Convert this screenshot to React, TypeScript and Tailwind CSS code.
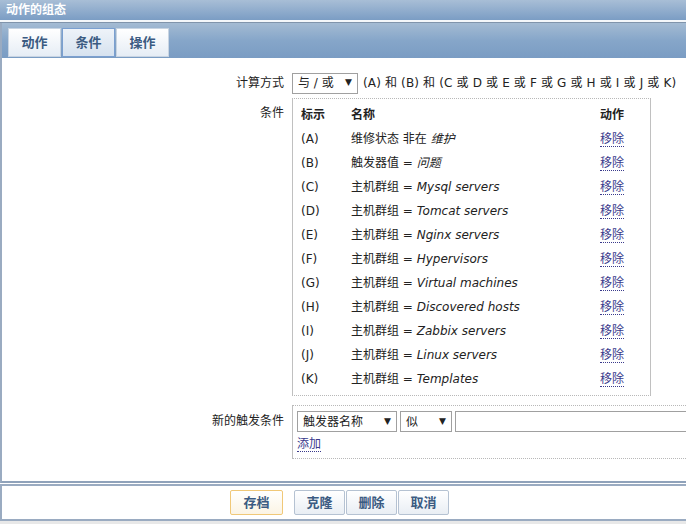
import React from "react";

const F = { fontFamily: '"DejaVu Sans", "Noto Sans CJK SC", sans-serif' };

const rows: [string, string, string][] = [
  ["(A)", "维修状态 非在 ", "维护"],
  ["(B)", "触发器值 = ", "问题"],
  ["(C)", "主机群组 = ", "Mysql servers"],
  ["(D)", "主机群组 = ", "Tomcat servers"],
  ["(E)", "主机群组 = ", "Nginx servers"],
  ["(F)", "主机群组 = ", "Hypervisors"],
  ["(G)", "主机群组 = ", "Virtual machines"],
  ["(H)", "主机群组 = ", "Discovered hosts"],
  ["(I)", "主机群组 = ", "Zabbix servers"],
  ["(J)", "主机群组 = ", "Linux servers"],
  ["(K)", "主机群组 = ", "Templates"],
];

function Link({ children }: { children: React.ReactNode }) {
  return (
    <span className="text-[#3a3a8c] border-b border-dotted border-[#3a3a8c] leading-[14px]">{children}</span>
  );
}

function Sel({ w, children }: { w: string; children: React.ReactNode }) {
  return (
    <div className={`${w} shrink-0 h-[21px] border border-[#a0a0a0] bg-white flex items-center justify-between pl-[5px] pr-[5px] text-[12px] text-[#222]`}>
      <span>{children}</span>
      <span className="text-[9px]">▼</span>
    </div>
  );
}

const tabCls =
  "h-[29px] w-[53px] flex items-center justify-center text-[13px] font-bold text-[#3b5b82] border border-[#c8d4e2] bg-gradient-to-b from-white to-[#e6edf5]";

export default function App() {
  return (
    <div className="w-[686px] h-[524px] bg-[#e8e8e8] overflow-hidden text-[12px] text-[#222]" style={F}>
      <div className="h-[20px] bg-gradient-to-b from-[#a8bed6] to-[#7b9dc4] text-white font-bold text-[12px] px-[6px] flex items-center">
        动作的组态
      </div>
      <div className="h-[3px] bg-[#f4f7fa] border-b border-[#8094ab]" />
      <div className="bg-white border-l-2 border-[#9aabc1] h-[460px] border-b-2 border-b-[#8fa2ba] flex flex-col">
        <div className="h-[35px] bg-gradient-to-b from-[#a4bbd3] via-[#86a6c9] to-[#7a9cc3] flex items-end gap-[1px] pl-[6px] pb-[1px]">
          <div className={tabCls}>动作</div>
          <div className="h-[29px] w-[53px] flex items-center justify-center text-[13px] font-bold text-[#3b5b82] border border-[#7a9fd0] bg-gradient-to-b from-[#eef3f9] to-[#d6e2ef]">
            条件
          </div>
          <div className={tabCls}>操作</div>
        </div>
        <div className="pt-[15px] flex flex-col">
          <div className="flex items-center h-[20px]">
            <div className="w-[290px] shrink-0 text-right pr-[8px]">计算方式</div>
            <Sel w="w-[66px]">与 / 或</Sel>
            <span className="ml-[5px] whitespace-nowrap tracking-[0.15px]">(A) 和 (B) 和 (C 或 D 或 E 或 F 或 G 或 H 或 I 或 J 或 K)</span>
          </div>
          <div className="flex mt-[5px]">
            <div className="w-[290px] shrink-0 text-right pr-[8px] pt-[6px]">条件</div>
            <div className="w-[359px] shrink-0 border-x border-[#c0c0c0] border-y border-y-[#b8b8b8] border-dotted px-[8px] pt-[3px] pb-[4px]" style={{ borderLeftStyle: "solid", borderRightStyle: "solid" }}>
              <div className="flex h-[25px] items-center font-bold">
                <div className="w-[50px]">标示</div>
                <div className="w-[249px]">名称</div>
                <div>动作</div>
              </div>
              {rows.map((r) => (
                <div key={r[0]} className="flex h-[24px] items-center">
                  <div className="w-[50px]">{r[0]}</div>
                  <div className="w-[249px] whitespace-nowrap">
                    {r[1]}
                    <i>{r[2]}</i>
                  </div>
                  <div>
                    <Link>移除</Link>
                  </div>
                </div>
              ))}
            </div>
          </div>
          <div className="flex mt-[9px]">
            <div className="w-[290px] shrink-0 text-right pr-[8px] pt-[7px]">新的触发条件</div>
            <div className="flex-1 min-w-0 h-[54px] border-y border-dotted border-[#b8b8b8] border-l border-l-[#c0c0c0] pl-[4px] pt-[5px]" style={{ borderLeftStyle: "solid" }}>
              <div className="flex gap-[3px]">
                <Sel w="w-[100px]">触发器名称</Sel>
                <Sel w="w-[52px]">似</Sel>
                <div className="w-[300px] shrink-0 h-[21px] border border-[#a0a0a0] bg-white" />
              </div>
              <div className="mt-[3px] h-[18px] flex items-center">
                <Link>添加</Link>
              </div>
            </div>
          </div>
        </div>
      </div>
      <div className="h-[1px] bg-white" />
      <div className="h-[37px] bg-white border-2 border-[#9aabc1] border-r-0 flex items-center pl-[228px]">
        <div className="h-[25px] w-[53px] flex items-center justify-center rounded-[2px] border border-[#f0c878] bg-gradient-to-b from-white to-[#fbf4e4] text-[13px] font-bold text-[#3b5b82]">
          存档
        </div>
        <div className="ml-[11px] flex gap-[1px]">
          {["克隆", "删除", "取消"].map((t) => (
            <div key={t} className="h-[25px] w-[51px] flex items-center justify-center rounded-[2px] border border-[#b5c2d2] bg-gradient-to-b from-white to-[#e9eef4] text-[13px] font-bold text-[#3b5b82]">
              {t}
            </div>
          ))}
        </div>
      </div>
    </div>
  );
}
